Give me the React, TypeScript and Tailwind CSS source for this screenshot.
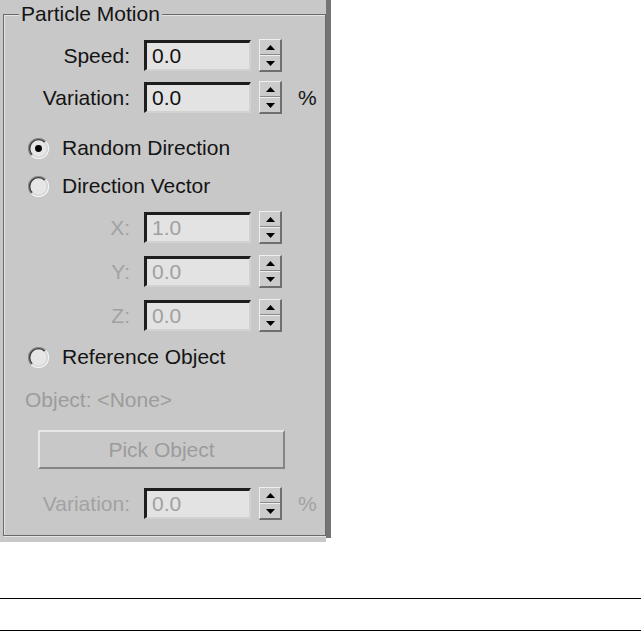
import React from "react";

const FONT = { fontFamily: '"Liberation Sans", Arial, sans-serif' };

function Spinner() {
  return (
    <div className="ml-[8px] flex h-[33px] w-[23px] flex-col border-t border-l border-t-[#f0f0f0] border-l-[#f0f0f0] border-b-2 border-r-2 border-b-[#6e6e6e] border-r-[#6e6e6e] bg-[#cbcbcb]">
      <div className="flex flex-1 items-center justify-center border-b border-b-[#8a8a8a]">
        <svg width="9" height="5" viewBox="0 0 9 5">
          <polygon points="4.5,0 9,5 0,5" fill="#000" />
        </svg>
      </div>
      <div className="flex flex-1 items-center justify-center border-t border-t-[#eeeeee]">
        <svg width="9" height="5" viewBox="0 0 9 5">
          <polygon points="0,0 9,0 4.5,5" fill="#000" />
        </svg>
      </div>
    </div>
  );
}

function NumField({
  label,
  value,
  disabled,
  percent,
  mt,
}: {
  label: string;
  value: string;
  disabled?: boolean;
  percent?: boolean;
  mt: string;
}) {
  const txt = disabled ? "text-[#a2a2a2]" : "text-[#141414]";
  return (
    <div className={`flex h-[31px] items-center ${mt}`}>
      <div className={`w-[127px] pr-[1px] text-right ${txt}`}>{label}</div>
      <div className="ml-[13px] flex h-[31px] w-[107px] items-center border-t-[3px] border-l-[3px] border-t-[#1e1e1e] border-l-[#1e1e1e] border-b-2 border-r-2 border-b-[#d2d2d2] border-r-[#d2d2d2] bg-[#e3e3e3] pl-[5px]">
        <span className={disabled ? "text-[#a0a0a0]" : "text-[#111]"}>{value}</span>
      </div>
      <Spinner />
      {percent && <div className={`ml-[16px] ${txt}`}>%</div>}
    </div>
  );
}

function Radio({ checked }: { checked?: boolean }) {
  return (
    <svg width="21" height="21" viewBox="0 0 20 20">
      <circle cx="10" cy="10" r="8" fill="#e6e6e6" />
      <path d="M3.28 16.72 A9.5 9.5 0 0 1 16.72 3.28" fill="none" stroke="#8a8a8a" strokeWidth="1.3" />
      <path d="M16.72 3.28 A9.5 9.5 0 0 1 3.28 16.72" fill="none" stroke="#f4f4f4" strokeWidth="1.3" />
      <path d="M4.05 15.95 A8.4 8.4 0 0 1 15.95 4.05" fill="none" stroke="#3a3a3a" strokeWidth="1.3" />
      <path d="M15.95 4.05 A8.4 8.4 0 0 1 4.05 15.95" fill="none" stroke="#d6d6d6" strokeWidth="1.3" />
      {checked && <circle cx="10" cy="10" r="3.3" fill="#000" />}
    </svg>
  );
}

function RadioRow({ label, checked, mt }: { label: string; checked?: boolean; mt: string }) {
  return (
    <div className={`flex h-[24px] items-center pl-[24px] ${mt}`}>
      <Radio checked={checked} />
      <span className="ml-[13px] text-[#141414]">{label}</span>
    </div>
  );
}

export default function App() {
  return (
    <div className="h-[631px] w-[641px] overflow-hidden bg-white text-[21px]" style={FONT}>
      <div className="flex h-[542px] w-[331px]">
        <div className="h-[542px] w-[326px] bg-[#c8c8c8] pl-[3px]">
          <fieldset className="w-[323px] border border-[#6a6a6a] pb-[16px] shadow-[inset_1px_1px_0_#e4e4e4,1px_1px_0_#e4e4e4]">
            <legend className="ml-[15px] bg-[#c8c8c8] px-[2px] leading-[28px] text-[#141414]">
              Particle Motion
            </legend>
            <NumField label="Speed:" value="0.0" mt="mt-[12px]" />
            <NumField label="Variation:" value="0.0" percent mt="mt-[11px]" />
            <RadioRow label="Random Direction" checked mt="mt-[23px]" />
            <RadioRow label="Direction Vector" mt="mt-[14px]" />
            <NumField label="X:" value="1.0" disabled mt="mt-[14px]" />
            <NumField label="Y:" value="0.0" disabled mt="mt-[13px]" />
            <NumField label="Z:" value="0.0" disabled mt="mt-[13px]" />
            <RadioRow label="Reference Object" mt="mt-[14px]" />
            <div className="mt-[19px] flex h-[24px] items-center pl-[21px] text-[#9c9c9c]">
              Object: &lt;None&gt;
            </div>
            <div className="mt-[18px] ml-[34px] flex h-[39px] w-[247px] items-center justify-center border-t-2 border-l-2 border-t-[#e6e6e6] border-l-[#e6e6e6] border-b-2 border-r-2 border-b-[#858585] border-r-[#858585] bg-[#c8c8c8] text-[#9c9c9c]">
              Pick Object
            </div>
            <NumField label="Variation:" value="0.0" disabled percent mt="mt-[19px]" />
          </fieldset>
        </div>
        <div className="h-[538px] w-[5px] bg-[#747474]" />
      </div>
      <div className="mt-[56px] h-0 w-[641px] border-t border-black" />
      <div className="mt-[31px] h-0 w-[641px] border-t border-black" />
    </div>
  );
}
